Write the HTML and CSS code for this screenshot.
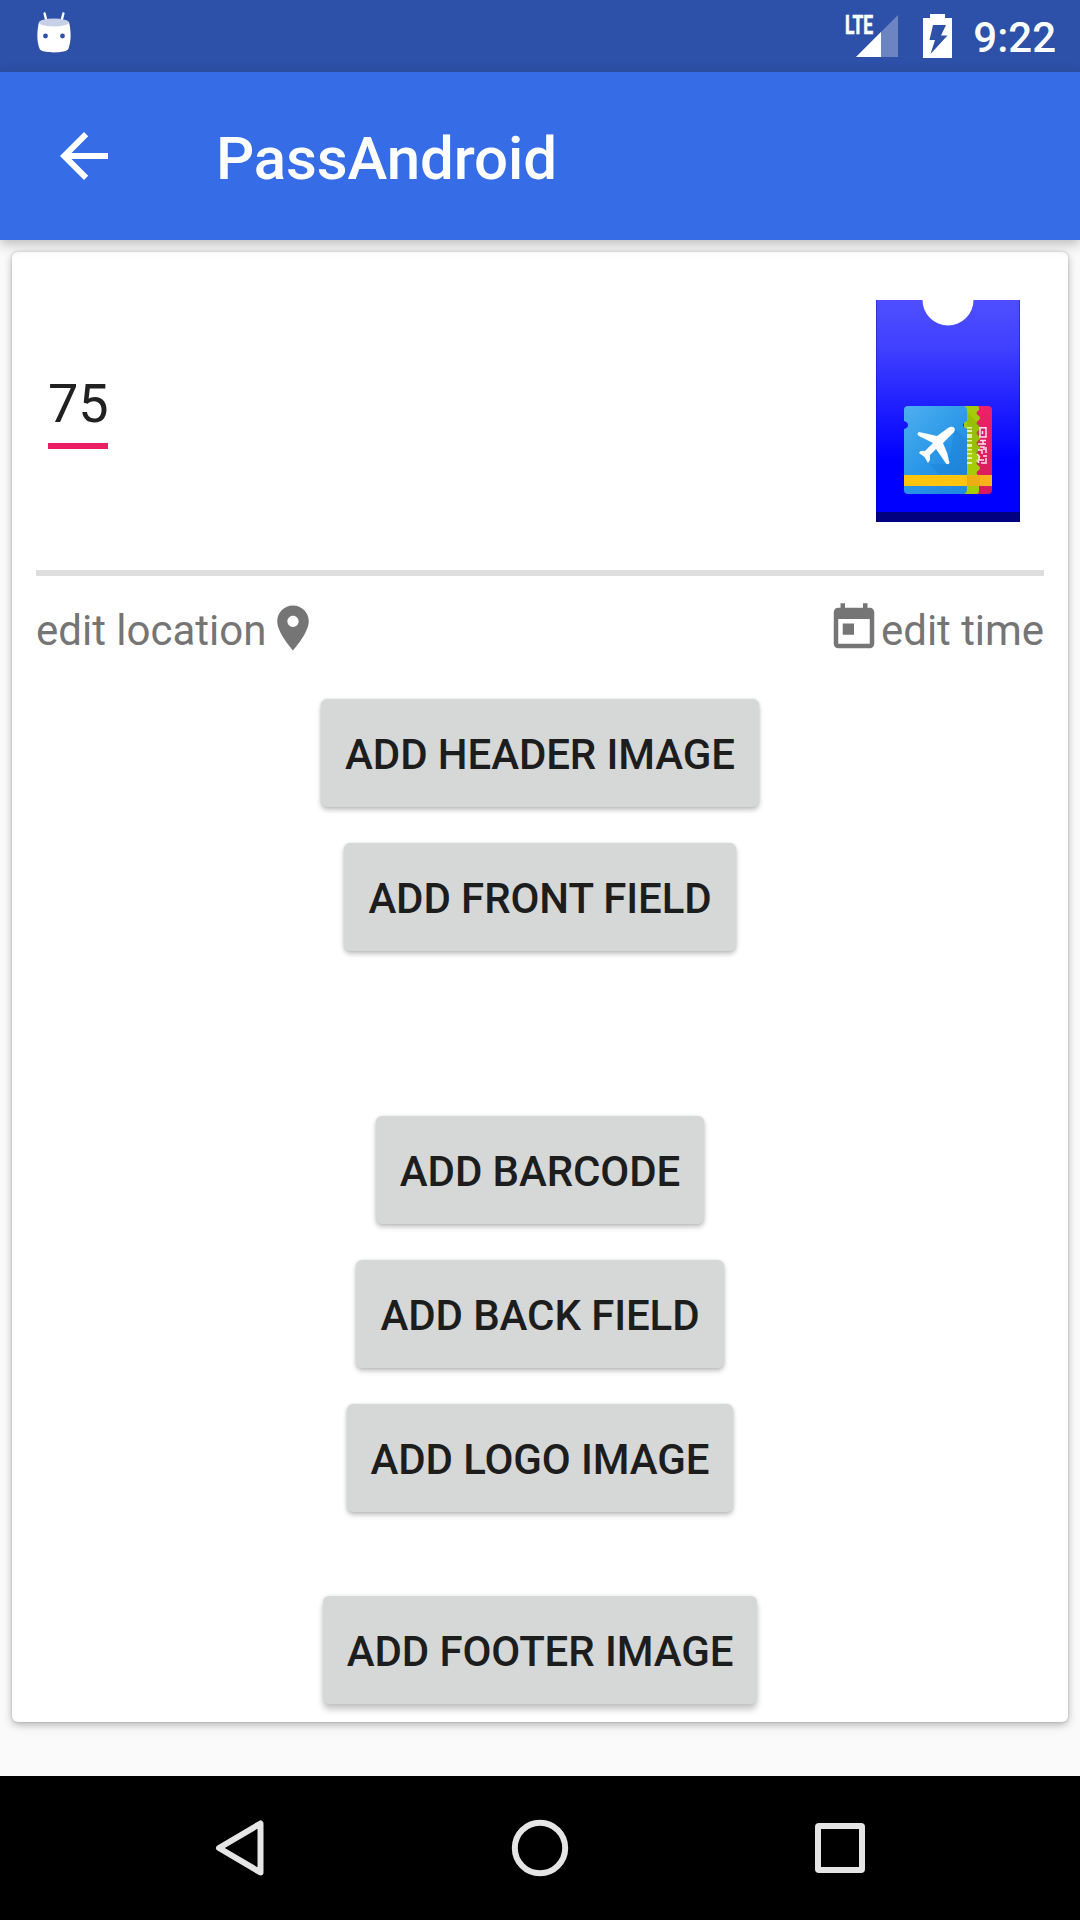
FILE: index.html
```html
<!DOCTYPE html>
<html lang="en">
<head>
<meta charset="utf-8">
<title>PassAndroid</title>
<link rel="stylesheet" href="styles.css">
</head>
<body>
<header class="status-bar">
  <svg class="debug-icon" width="36" height="42" viewBox="0 0 36 42">
    <path d="M8.600 1.500L10.500 9M27.400 1.500L25.500 9" stroke="#fff" stroke-width="2.400" stroke-linecap="round"/>
    <path d="M3 10C1 18 0.500 29 3.500 36.500C4.500 41.700 31.500 41.700 32.500 36.500C35.500 29 35 18 33 10Z" fill="#fff"/>
    <ellipse cx="18" cy="10.500" rx="15" ry="4" fill="#c7d0e7"/>
    <circle cx="9.500" cy="24" r="2.400" fill="#2d51a8"/>
    <circle cx="26.500" cy="24" r="2.400" fill="#2d51a8"/>
  </svg>
  <div class="indicators">
    <svg class="signal-icon" width="60" height="58" viewBox="0 0 60 58">
      <path d="M57 15V57H15Z" fill="#fff" fill-opacity=".3"/>
      <path d="M40 32V57H15Z" fill="#fff"/>
      <text class="network" x="4" y="33.500" textLength="28" lengthAdjust="spacingAndGlyphs">LTE</text>
    </svg>
    <svg class="battery-icon" width="29" height="44" viewBox="0 0 29 44">
      <path d="M7 0H22V4H29V44H0V4H7Z" fill="#fff"/>
      <path d="M10 11H23L18 21.500H24.500L7.500 40L12 26H6.500Z" fill="#2d51a8"/>
    </svg>
    <span class="clock">9:22</span>
  </div>
</header>

<div class="toolbar">
  <svg class="back-icon" width="48" height="48" viewBox="0 0 48 48">
    <path d="M48 21H11.500L28.200 4.200L24 0L0 24L24 48L28.200 43.800L11.500 27H48Z" fill="#fff"/>
  </svg>
  <h1 class="title">PassAndroid</h1>
</div>

<main class="content">
  <section class="card">
    <div class="pass-head">
      <span class="pass-name">75</span>
      <svg class="pass-image" width="144" height="222" viewBox="0 0 144 222">
        <defs>
          <linearGradient id="sleeve" x1="0" y1="0" x2="0" y2="1">
            <stop offset="0" stop-color="#4e4eff"/>
            <stop offset=".22" stop-color="#4040ff"/>
            <stop offset=".5" stop-color="#1c1cff"/>
            <stop offset=".72" stop-color="#0000ff"/>
          </linearGradient>
          <linearGradient id="ticket" x1="0" y1="0" x2=".7" y2="1">
            <stop offset="0" stop-color="#4fb0ef"/>
            <stop offset=".6" stop-color="#2996e8"/>
            <stop offset="1" stop-color="#2089e0"/>
          </linearGradient>
          <linearGradient id="stub" x1="0" y1="0" x2="0" y2="1">
            <stop offset="0" stop-color="#ed2168"/>
            <stop offset="1" stop-color="#d51b5c"/>
          </linearGradient>
        </defs>
        <rect width="144" height="222" fill="url(#sleeve)"/>
        <path d="M.5 0V212M143.500 0V212" stroke="#0000a0" stroke-opacity=".35"/>
        <path d="M46.500 0A25.500 25.500 0 0 0 97.500 0Z" fill="#fff"/>
        <rect y="212" width="144" height="10" fill="#000080"/>
        <g transform="translate(28 106)">
          <path d="M60 0H84Q88 0 88 4V84Q88 88 84 88H60Z" fill="url(#stub)"/>
          <path d="M60 0H74Q76 2 75 4Q70 7 75 10Q77 12 75 14Q70 17 75 20Q77 22 75 24Q70 27 75 30Q77 32 75 34Q70 37 75 40Q77 42 75 44Q70 47 75 50Q77 52 75 54Q70 57 75 60Q77 62 75 64Q70 67 75 70V85Q75 88 72 88H60Z" fill="#a5cc09"/>
          <path d="M63 6L75 18V50L63 40Z" fill="#6f9900" fill-opacity=".25"/>
          <path d="M4 0H60Q63 1 63 5V15Q59 17 59 19Q59 21 63 23V83Q63 88 59 88H4Q0 88 0 84V23Q4 22 4 19Q4 16 0 15V4Q0 0 4 0Z" fill="url(#ticket)"/>
          <path d="M51 22L63 34V68H35L25 58L44 58Z" fill="#0d65b5" fill-opacity=".16"/>
          <path d="M0 69H88V80H0Z" fill="#ffc40d"/>
          <path d="M63 69H76V80H63Z" fill="#eead12"/>
          <path d="M76 69H88V80H76Z" fill="#f9b219"/>
          <path d="M49 21Q52 22 50 26L39 37Q44 47 45.500 57Q43 60 41 56L32 43L26 49L26 54L24 57L20.500 51L15 47Q16 44 21 45L29 37L15 30Q12 28 15 26L33 30L44 22Q47 20 49 21Z" fill="#fff"/>
          <path d="M63 21H68V22.500H63ZM63 24H68V26H63ZM63 28H68V32H63ZM63 34H68V35.500H63ZM63 38H68V41H63ZM63 43H68V44.500H63ZM63 47H68V48.500H63ZM63 51H68V53H63ZM63 56H68V58H63Z" fill="#e3f0a8"/>
          <path d="M76 21.700H82V31H76ZM78.500 25V28M76 34.500H82M79 34V38M74 38H82M76 41H80V44M82 41V47M74 44H78V48M73 48L76 51M79 50H83M75 51V54H80M73 54L75 57M77 57H83M82 52V56" fill="none" stroke="#ffe3ed" stroke-width="1.500"/>
        </g>
      </svg>
    </div>

    <div class="meta-row">
      <div class="meta">
        <span>edit location</span>
        <svg class="meta-icon" width="54" height="54" viewBox="0 0 24 24">
          <path d="M12 2C8.130 2 5 5.130 5 9c0 5.250 7 13 7 13s7-7.750 7-13c0-3.870-3.130-7-7-7zm0 9.500c-1.380 0-2.500-1.120-2.500-2.500s1.120-2.500 2.500-2.500 2.500 1.120 2.500 2.500-1.120 2.500-2.500 2.500z"/>
        </svg>
      </div>
      <div class="meta">
        <svg class="meta-icon" width="54" height="54" viewBox="0 0 24 24">
          <path d="M19 3h-1V1h-2v2H8V1H6v2H5c-1.110 0-1.990.9-1.990 2L3 19c0 1.100.89 2 2 2h14c1.100 0 2-.9 2-2V5c0-1.100-.9-2-2-2zm0 16H5V8h14v11zM7 10h5v5H7z"/>
        </svg>
        <span class="meta-time">edit time</span>
      </div>
    </div>

    <div class="group group-front">
      <button class="button">ADD HEADER IMAGE</button>
      <button class="button">ADD FRONT FIELD</button>
    </div>
    <div class="group group-back">
      <button class="button">ADD BARCODE</button>
      <button class="button">ADD BACK FIELD</button>
      <button class="button">ADD LOGO IMAGE</button>
    </div>
    <div class="group group-footer">
      <button class="button button-raised">ADD FOOTER IMAGE</button>
    </div>
  </section>
</main>

<nav class="nav-bar">
  <svg width="60" height="60" viewBox="0 0 60 60"><path d="M50.500 5.500V54.500L9 30Z"/></svg>
  <svg width="60" height="60" viewBox="0 0 60 60"><circle cx="30" cy="30" r="25.200"/></svg>
  <svg width="60" height="60" viewBox="0 0 60 60"><rect x="8" y="8" width="44" height="44" rx="1"/></svg>
</nav>
</body>
</html>
```
FILE: styles.css
```css
* {
  box-sizing: border-box;
}

body {
  margin: 0;
  width: 1080px;
  height: 1920px;
  display: flex;
  flex-direction: column;
  overflow: hidden;
  background: #fafafa;
  font-family: Roboto, sans-serif;
  color: #212121;
}

svg {
  display: block;
  flex: none;
}

.status-bar {
  flex: none;
  height: 72px;
  padding: 0 24px 0 36px;
  display: flex;
  justify-content: space-between;
  background: #2d51a8;
  color: #fff;
}

.debug-icon {
  margin-top: 12px;
}

.indicators {
  display: flex;
}

.signal-icon {
  margin-right: 22px;
}

.network {
  font-size: 26px;
  font-weight: 700;
  fill: #fff;
  stroke: #fff;
  stroke-width: .7;
}

.battery-icon {
  margin: 14px 21px 0 0;
}

.clock {
  font-size: 42px;
  font-weight: 500;
  line-height: 50px;
  margin-top: 13px;
}

.toolbar {
  flex: none;
  height: 168px;
  padding: 0 60px;
  display: flex;
  align-items: center;
  gap: 108px;
  position: relative;
  z-index: 1;
  background: #366de7;
  color: #fff;
  box-shadow: 0 4px 12px rgba(0, 0, 0, .26);
}

.title {
  margin: 6px 0 0;
  font-size: 60px;
  font-weight: 500;
  line-height: 72px;
  letter-spacing: -.12px;
}

.content {
  flex: 1;
  padding: 12px;
}

.card {
  height: 1470px;
  padding: 0 24px;
  border-radius: 6px;
  background: #fff;
  box-shadow: 0 3px 8px rgba(0, 0, 0, .28), 0 0 3px rgba(0, 0, 0, .16);
}

.pass-head {
  height: 324px;
  padding: 48px 24px 0 12px;
  display: flex;
  justify-content: space-between;
  border-bottom: 6px solid #dedede;
}

.pass-name {
  width: 60px;
  height: 83px;
  margin-top: 66px;
  padding-top: 6px;
  border-bottom: 6px solid #e91e63;
  font-size: 54px;
  line-height: 64px;
}

.meta-row {
  height: 105px;
  padding-top: 25px;
  display: flex;
  justify-content: space-between;
  color: #757575;
  font-size: 42px;
  line-height: 60px;
}

.meta {
  display: flex;
}

.meta-icon {
  fill: #757575;
}

.meta-time {
  letter-spacing: -.05px;
}

.group {
  display: flex;
  flex-direction: column;
  align-items: center;
  gap: 36px;
  padding-top: 18px;
}

.group-back {
  padding-top: 165px;
}

.group-footer {
  padding-top: 84px;
}

.button {
  height: 108px;
  padding: 4px 24px 0;
  border: 0;
  border-radius: 6px;
  background: #d6d8d7;
  color: #1d1d1d;
  font: 500 42px/50px Roboto, sans-serif;
  letter-spacing: -.1px;
  box-shadow: 0 3px 5px rgba(0, 0, 0, .24), 0 0 3px rgba(0, 0, 0, .1);
}

.button-raised {
  box-shadow: 0 6px 6px rgba(0, 0, 0, .2), 0 0 4px rgba(0, 0, 0, .12);
}

.nav-bar {
  flex: none;
  height: 144px;
  display: flex;
  justify-content: center;
  align-items: center;
  gap: 240px;
  background: #000;
  fill: none;
  stroke: #e5e5e5;
  stroke-width: 6;
  stroke-linejoin: round;
}
```
